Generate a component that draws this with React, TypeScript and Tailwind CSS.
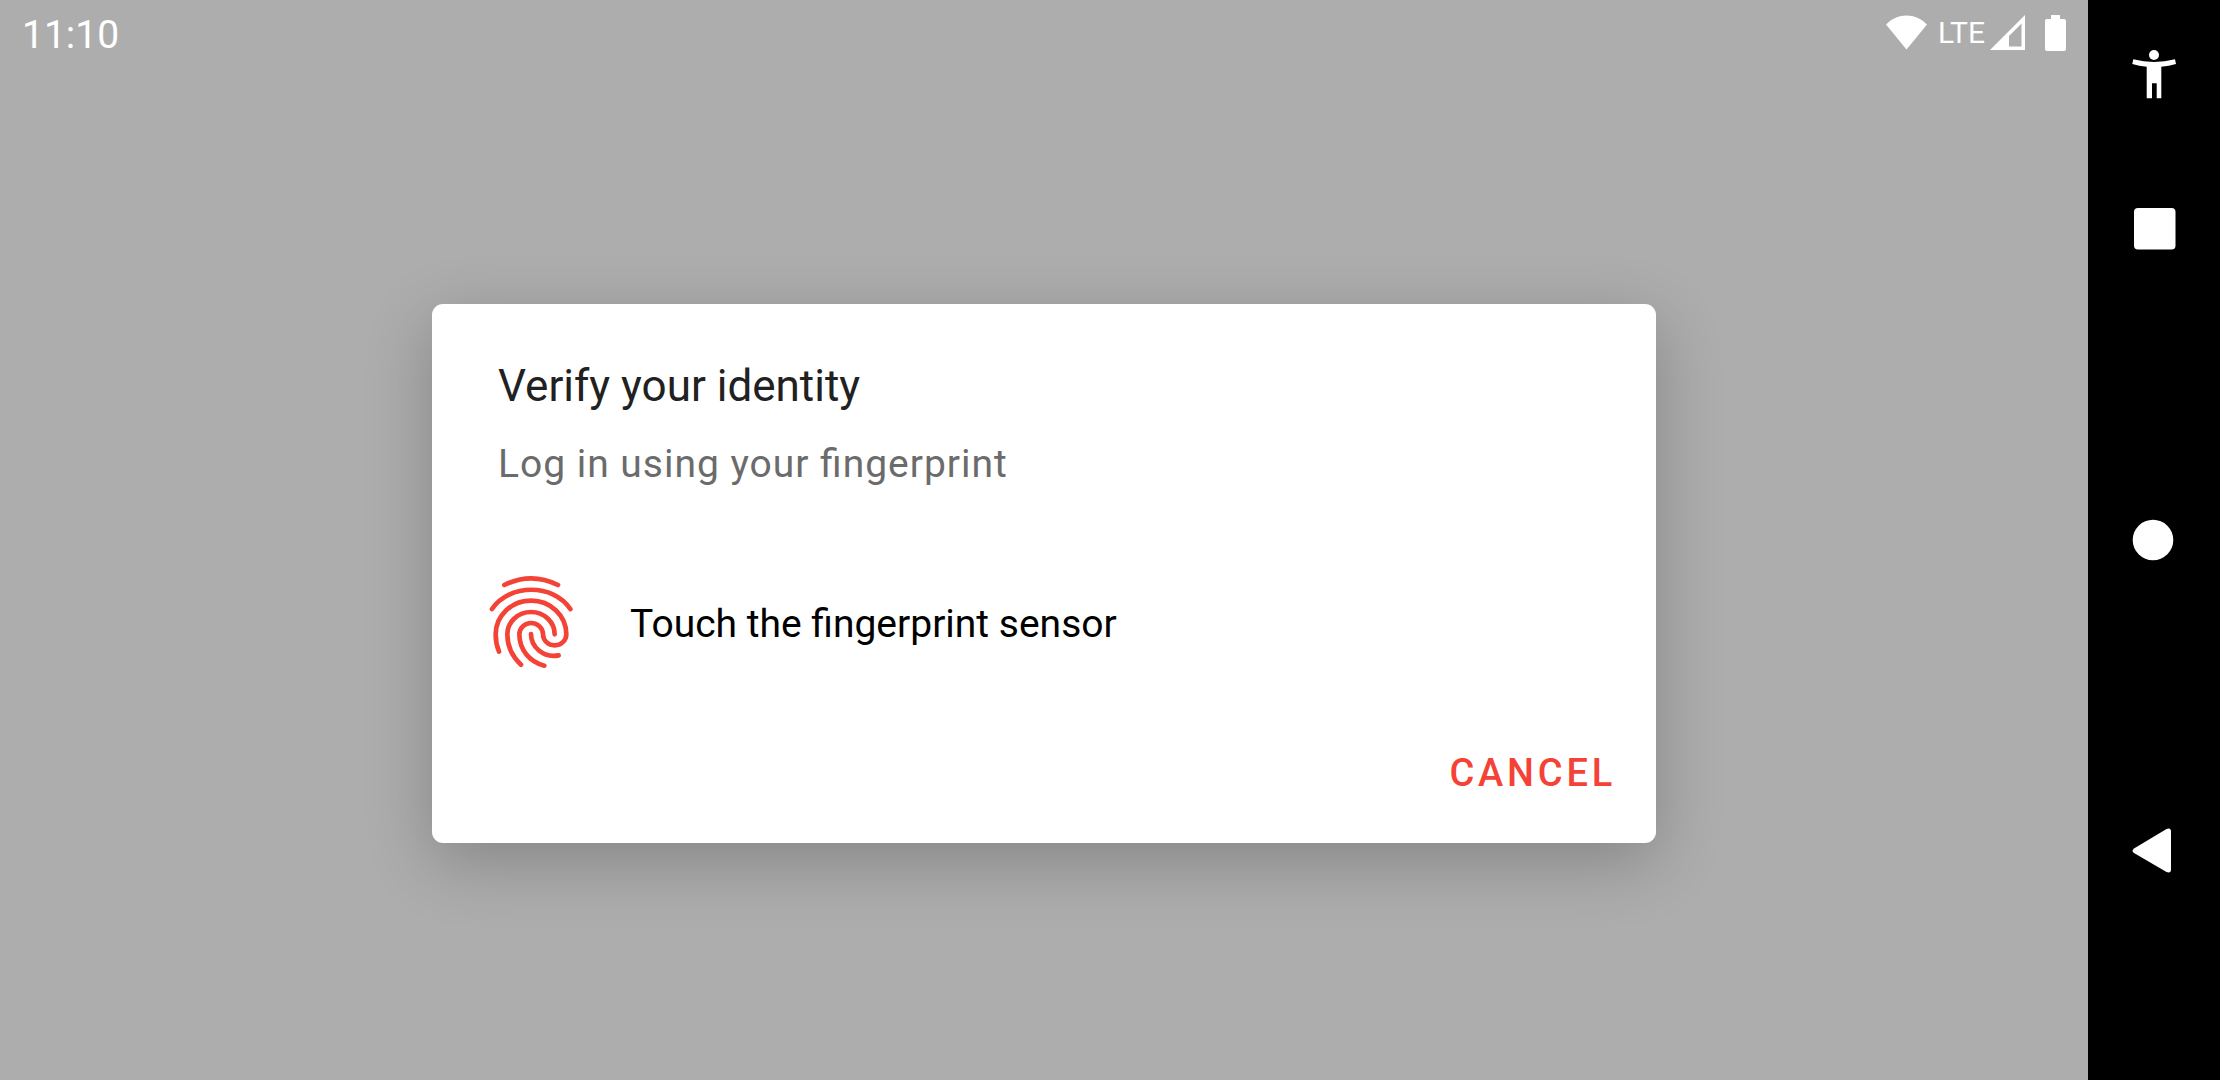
import type { ReactNode } from "react";

function WifiIcon() {
  return (
    <svg className="h-[36px] w-[42px]" viewBox="0 0 42 36" fill="currentColor" aria-hidden="true">
      <path d="M0 9.500C6 3.500 13 0.500 20.500 0.500S35 3.500 41 9.500L20.500 34.500Z" />
    </svg>
  );
}

function SignalIcon() {
  return (
    <svg className="h-[36px] w-[35px]" viewBox="0 0 35 36" fill="currentColor" aria-hidden="true">
      <path fillRule="evenodd" d="M35 0V35H0ZM31.500 8.500L19 21V31.500H31.500Z" />
    </svg>
  );
}

function BatteryIcon() {
  return (
    <svg className="h-[36px] w-[21px]" viewBox="0 0 21 36" fill="currentColor" aria-hidden="true">
      <path d="M6 0H15V4H19Q21 4 21 6V34Q21 36 19 36H2Q0 36 0 34V6Q0 4 2 4H6Z" />
    </svg>
  );
}

function FingerprintIcon() {
  return (
    <svg
      className="size-[110px] shrink-0"
      viewBox="18 24 330 330"
      fill="none"
      stroke="#f44336"
      strokeWidth="14"
      strokeLinecap="round"
      aria-hidden="true"
    >
      <path d="M103 72Q183 32 264 72" />
      <path d="M66 144C118 67 250 67 301 144" />
      <path d="M87 272C80 255 77 238 77 220C77 164 124 119 183 119C242 119 289 164 289 220A35 33 0 0 1 219 220A35.500 34 0 0 0 148 220C148 265 178 303 223 314" />
      <path d="M254 220C254 183 222 153 183 153C144 153 112 183 112 220C112 253 126 286 153 311" />
      <path d="M183 219C183 257 219 292 266 283" />
    </svg>
  );
}

function NavButton({ label, children }: { label: string; children: ReactNode }) {
  return (
    <button type="button" aria-label={label} className="flex h-[154px] w-full items-center justify-center text-white">
      <svg className="size-[66px]" viewBox="0 0 66 66" fill="currentColor" aria-hidden="true">
        {children}
      </svg>
    </button>
  );
}

function StatusBar() {
  return (
    <header className="flex h-[66px] items-start justify-between pr-[22px] pl-[22px] text-white">
      <time className="pt-3 text-[39px] leading-[46px]">11:10</time>
      <div className="flex items-start pt-[15px]">
        <WifiIcon />
        <span className="ml-[10px] text-[30px] leading-[36px]">LTE</span>
        <span className="ml-[5px]">
          <SignalIcon />
        </span>
        <span className="ml-5">
          <BatteryIcon />
        </span>
      </div>
    </header>
  );
}

function FingerprintDialog() {
  return (
    <section
      role="dialog"
      aria-labelledby="dialog-title"
      aria-describedby="dialog-subtitle"
      className="w-[1224px] max-w-full rounded-[11px] bg-white px-10 pt-14 pb-[47px] shadow-[0_18px_66px_rgba(0,0,0,0.23)]"
    >
      <div className="px-[26px]">
        <h1 id="dialog-title" className="text-[44px] leading-[52px] text-[#212121]">
          Verify your identity
        </h1>
        <p id="dialog-subtitle" className="mt-[29px] text-[39px] leading-[46px] tracking-wide text-[#6b6b6b] [font-feature-settings:'liga']">
          Log in using your fingerprint
        </p>
      </div>
      <div className="mt-[82px] flex items-center gap-11 pl-1">
        <FingerprintIcon />
        <p className="text-[39px] leading-[46px] text-black">Touch the fingerprint sensor</p>
      </div>
      <div className="mt-[71px] flex justify-end">
        <button type="button" className="text-[38px] leading-[46px] font-medium tracking-widest text-[#f44336]">
          CANCEL
        </button>
      </div>
    </section>
  );
}

export default function App() {
  return (
    <div className="flex min-h-screen bg-[#adadad] font-[Roboto,sans-serif]">
      <div className="flex min-w-0 flex-1 flex-col">
        <StatusBar />
        <main className="flex flex-1 items-center justify-center">
          <FingerprintDialog />
        </main>
      </div>
      <nav aria-label="System navigation" className="flex w-[132px] flex-col justify-between bg-black">
        <div>
          <NavButton label="Accessibility">
            <circle cx="33" cy="11" r="5" />
            <path d="M12.300 15.300Q33 20.500 54 15.300L55 20Q48 22 40.300 22.700V54.300H35.700V39.300H31V54.300H25.700V22.700Q18 22 11.300 20Z" />
          </NavButton>
          <NavButton label="Recent apps">
            <rect x="13" y="10" width="41.500" height="41.500" rx="4" />
          </NavButton>
        </div>
        <NavButton label="Home">
          <circle cx="32" cy="33" r="20.300" />
        </NavButton>
        <div className="pb-[154px]">
          <NavButton label="Back">
            <path d="M13 32.500L45.500 13Q50 11.500 50 15.500V53.500Q50 57.500 45.500 56L13 37Q10 34.800 13 32.500Z" />
          </NavButton>
        </div>
      </nav>
    </div>
  );
}
